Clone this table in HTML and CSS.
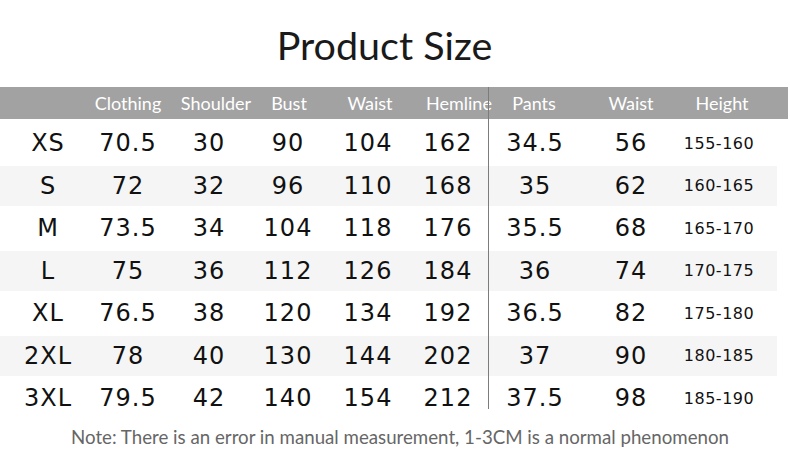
FILE: index.html
```html
<!DOCTYPE html>
<html>
<head>
<meta charset="utf-8">
<link rel="stylesheet" href="styles.css">
</head>
<body>
<div class="page">
  <h1 class="title">Product Size</h1>
  <div class="table">
    <div class="divider"></div>
    <div class="head">
      <span></span><span>Clothing</span><span>Shoulder</span><span>Bust</span><span>Waist</span><span>Hemline</span><span>Pants</span><span>Waist</span><span>Height</span>
    </div>
    <div class="rows">
      <div class="row"><span>XS</span><span>70.5</span><span>30</span><span>90</span><span>104</span><span>162</span><span>34.5</span><span>56</span><span class="h">155-160</span></div>
      <div class="row alt"><span>S</span><span>72</span><span>32</span><span>96</span><span>110</span><span>168</span><span>35</span><span>62</span><span class="h">160-165</span></div>
      <div class="row"><span>M</span><span>73.5</span><span>34</span><span>104</span><span>118</span><span>176</span><span>35.5</span><span>68</span><span class="h">165-170</span></div>
      <div class="row alt"><span>L</span><span>75</span><span>36</span><span>112</span><span>126</span><span>184</span><span>36</span><span>74</span><span class="h">170-175</span></div>
      <div class="row"><span>XL</span><span>76.5</span><span>38</span><span>120</span><span>134</span><span>192</span><span>36.5</span><span>82</span><span class="h">175-180</span></div>
      <div class="row alt"><span>2XL</span><span>78</span><span>40</span><span>130</span><span>144</span><span>202</span><span>37</span><span>90</span><span class="h">180-185</span></div>
      <div class="row"><span>3XL</span><span>79.5</span><span>42</span><span>140</span><span>154</span><span>212</span><span>37.5</span><span>98</span><span class="h">185-190</span></div>
    </div>
  </div>
  <p class="note">Note: There is an error in manual measurement, 1-3CM is a normal phenomenon</p>
</div>
</body>
</html>
```
FILE: styles.css
```css
html, body {
  margin: 0;
  padding: 0;
  background: #fff;
}
.page {
  width: 790px;
  height: 457px;
  overflow: hidden;
}
.title {
  margin: 0;
  padding-top: 25px;
  padding-right: 21px;
  height: 87px;
  box-sizing: border-box;
  text-align: center;
  font-family: Lato, "Open Sans", sans-serif;
  font-weight: 400;
  font-size: 39.5px;
  line-height: 40px;
  color: #1a1a1a;
}
.table {
  position: relative;
  width: 790px;
}
.divider {
  position: absolute;
  left: 488px;
  top: 0;
  width: 1px;
  height: 322px;
  background: #7c7c7c;
}
.head {
  display: grid;
  grid-template-columns: 88px 80px 96px 50px 112px 64px 88px 106px 76px;
  width: 788px;
  height: 32px;
  align-items: center;
  background: #a2a2a2;
  color: #fff;
  font-family: Lato, "Open Sans", sans-serif;
  font-size: 18px;
  text-align: center;
  margin-bottom: 4px;
}
.rows {
  display: flex;
  flex-direction: column;
  gap: 2.5px;
}
.row {
  display: grid;
  grid-template-columns: 96px 64px 98px 60px 100px 60px 114px 78px 98px;
  width: 777px;
  height: 40px;
  align-items: center;
  text-align: center;
  font-family: "DejaVu Sans", Verdana, sans-serif;
  font-size: 24px;
  letter-spacing: 1px;
  color: #111;
}
.row.alt {
  background: #f5f5f5;
}
.row .h {
  font-size: 16px;
  letter-spacing: 0.5px;
}
.note {
  margin: 8px 0 0;
  text-align: center;
  font-family: Lato, "Open Sans", sans-serif;
  font-size: 18.7px;
  color: #666;
  padding-left: 10px;
}
```
